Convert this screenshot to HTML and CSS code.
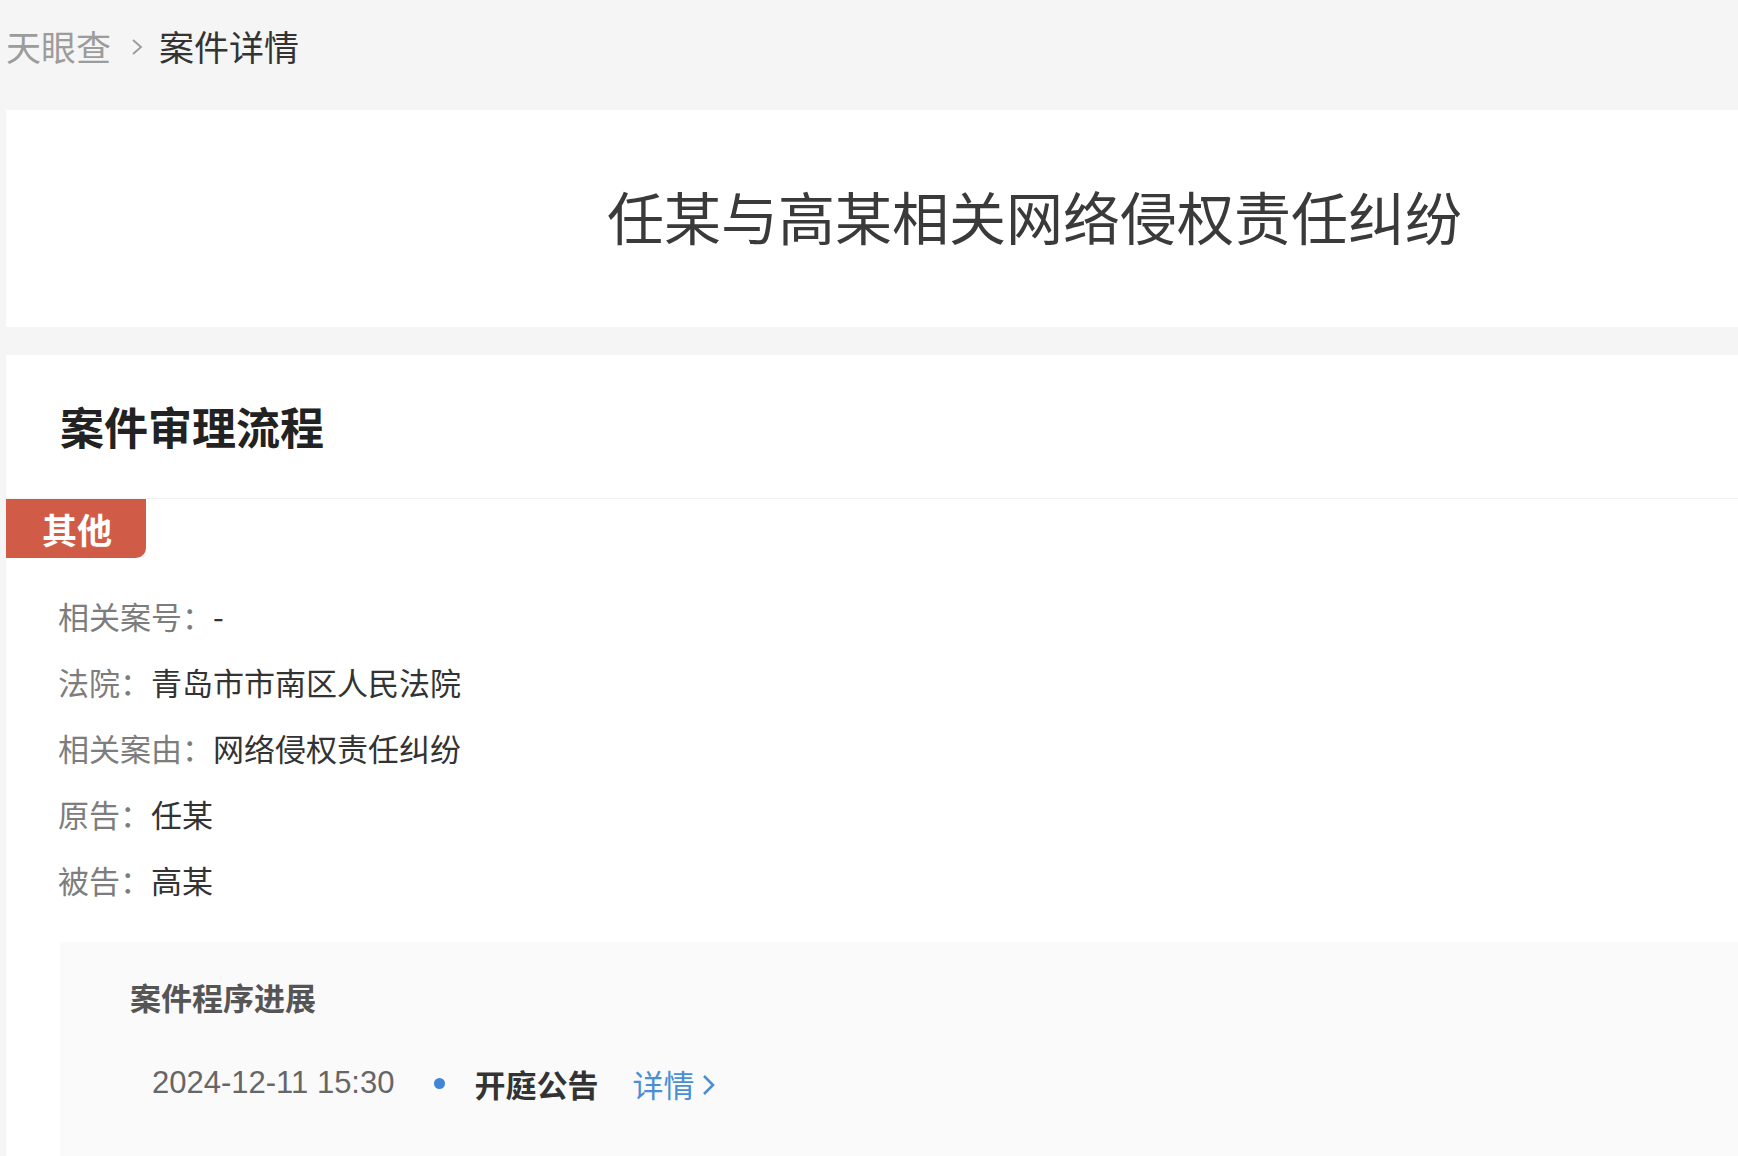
FILE: index.html
```html
<!DOCTYPE html>
<html lang="zh-CN">
<head>
<meta charset="utf-8">
<title>案件详情</title>
<link rel="stylesheet" href="styles.css">
</head>
<body>
<div class="page">
  <nav class="crumbs">
    <span class="crumb-home">天眼查</span>
    <svg class="crumb-sep" width="12" height="18" viewBox="0 0 12 18"><polyline points="2,2 10,9 2,16" fill="none" stroke="#9a9a9a" stroke-width="1.8"/></svg>
    <span class="crumb-current">案件详情</span>
  </nav>

  <section class="card title-card">
    <h1 class="case-title">任某与高某相关网络侵权责任纠纷</h1>
  </section>

  <section class="card flow-card">
    <h2 class="flow-head">案件审理流程</h2>
    <div class="tag">其他</div>
    <ul class="info">
      <li><span class="lbl">相关案号：</span><span class="val">-</span></li>
      <li><span class="lbl">法院：</span><span class="val">青岛市市南区人民法院</span></li>
      <li><span class="lbl">相关案由：</span><span class="val">网络侵权责任纠纷</span></li>
      <li><span class="lbl">原告：</span><span class="val">任某</span></li>
      <li><span class="lbl">被告：</span><span class="val">高某</span></li>
    </ul>
    <div class="progress">
      <div class="progress-head">案件程序进展</div>
      <div class="step">
        <span class="step-time">2024-12-11 15:30</span>
        <span class="step-dot"></span>
        <span class="step-name">开庭公告</span>
        <a class="step-link" href="#">详情<svg class="link-chev" width="15" height="24" viewBox="0 0 15 24"><polyline points="3,3 12,12 3,21" fill="none" stroke="#4a8fd4" stroke-width="2.6"/></svg></a>
      </div>
    </div>
  </section>
</div>
</body>
</html>
```

FILE: styles.css
```css
* { box-sizing: border-box; }
html, body {
  margin: 0;
  padding: 0;
  background: #f5f5f5;
  font-family: "Noto Sans CJK SC", "Noto Sans", sans-serif;
  width: 1738px;
  height: 1156px;
  overflow: hidden;
}
.page {
  display: flex;
  flex-direction: column;
  padding-left: 6px;
  height: 1156px;
}
.page > * { flex-shrink: 0; }
.crumbs {
  height: 110px;
  display: flex;
  align-items: center;
  padding-bottom: 20px;
  font-size: 35px;
  line-height: 1;
}
.crumb-home { color: #9c9c9c; }
.crumb-sep { margin: 4px 16px 0 20px; }
.crumb-current { color: #333; }

.card { background: #fff; }

.title-card {
  height: 217px;
  display: flex;
  align-items: center;
  padding-left: 601px;
  padding-bottom: 6px;
}
.case-title {
  margin: 0;
  font-size: 57px;
  font-weight: 400;
  color: #3a3a3a;
  line-height: 1;
}

.flow-card {
  margin-top: 28px;
  flex: 1 1 auto;
  min-height: 0;
  display: flex;
  flex-direction: column;
}
.flow-card > * { flex-shrink: 0; }
.flow-head {
  margin: 0;
  height: 144px;
  display: flex;
  align-items: center;
  padding-left: 54px;
  padding-bottom: 2px;
  font-size: 44px;
  font-weight: 700;
  color: #222;
  border-bottom: 1px solid #f2f2f2;
}
.tag {
  width: 140px;
  height: 59px;
  background: #d05c47;
  color: #fff;
  font-size: 35px;
  font-weight: 700;
  line-height: 59px;
  padding-left: 36px;
  border-bottom-right-radius: 10px;
}
.info {
  list-style: none;
  margin: 25px 0 0;
  padding: 0 0 0 52px;
}
.info li {
  height: 66px;
  line-height: 66px;
  font-size: 31px;
}
.lbl { color: #7d7d7d; }
.val { color: #333; }

.progress {
  margin: 29px 0 0 54px;
  background: #fafafa;
  flex: 1 1 auto;
  padding: 37px 0 0 70px;
}
.progress-head {
  font-size: 31px;
  font-weight: 700;
  color: #555;
  line-height: 36px;
}
.step {
  display: flex;
  align-items: center;
  margin-top: 43px;
  padding-left: 22px;
  height: 50px;
}
.step-time {
  font-family: "Liberation Sans", Arial, sans-serif;
  font-size: 31px;
  color: #666;
}
.step-dot {
  width: 11px;
  height: 11px;
  border-radius: 50%;
  background: #3f86d8;
  margin: 0 29px 0 40px;
}
.step-name {
  font-size: 31px;
  font-weight: 700;
  color: #333;
}
.step-link {
  margin-left: 34px;
  font-size: 31px;
  color: #4a8fd4;
  text-decoration: none;
  display: flex;
  align-items: center;
}
.link-chev { margin-left: 7px; margin-top: 3px; }
```
